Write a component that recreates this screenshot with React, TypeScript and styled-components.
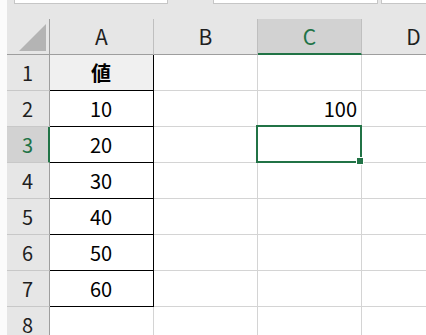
import React from "react";
import styled, { createGlobalStyle, css } from "styled-components";

const GlobalStyle = createGlobalStyle`
  html, body {
    margin: 0;
    padding: 0;
    background: #ffffff;
    overflow: hidden;
  }
  #root {
    width: 426px;
    height: 335px;
    overflow: hidden;
  }
`;

const FONT = `"Noto Sans CJK JP", "Noto Sans", sans-serif`;
const GREEN = "#217346";

const Window = styled.div`
  display: flex;
  width: 426px;
  height: 335px;
  overflow: hidden;
  background: #ffffff;
  font-family: ${FONT};
`;

const LeftStrip = styled.div`
  flex: 0 0 7px;
  background: #fbfbfb;
`;

const Main = styled.div`
  flex: 1 1 auto;
  display: flex;
  flex-direction: column;
  min-width: 0;
`;

const FormulaBar = styled.div`
  flex: 0 0 19px;
  display: flex;
  align-items: flex-start;
  background: #e6e6e6;
  padding-left: 7px;
  gap: 0;
`;

const InputBox = styled.div<{ $w: number; $ml: number }>`
  box-sizing: border-box;
  width: ${(p) => p.$w}px;
  margin-left: ${(p) => p.$ml}px;
  height: 4px;
  background: #ffffff;
  border: 1px solid #c6c6c6;
  border-top: none;
  flex: 0 0 auto;
`;

const Sheet = styled.div`
  display: grid;
  grid-template-columns: 43px repeat(4, 104px);
  grid-auto-rows: 36px;
  font-size: 20px;
  line-height: 35px;
  color: #000;
`;

const cellBase = css`
  box-sizing: border-box;
  position: relative;
  white-space: nowrap;
  overflow: visible;
`;

const Corner = styled.div`
  ${cellBase};
  background: #e6e6e6;
  border-right: 1px solid #9e9e9e;
  border-bottom: 1px solid #9e9e9e;
  display: flex;
  align-items: flex-end;
  justify-content: flex-end;
  padding: 0 3px 3px 0;
`;

const ColHeader = styled.div<{ $active?: boolean }>`
  ${cellBase};
  background: ${(p) => (p.$active ? "#d2d2d2" : "#e6e6e6")};
  color: ${(p) => (p.$active ? GREEN : "#1f1f1f")};
  border-right: 1px solid #bfbfbf;
  border-bottom: ${(p) => (p.$active ? `2px solid ${GREEN}` : "1px solid #9e9e9e")};
  line-height: ${(p) => (p.$active ? "34px" : "35px")};
  text-align: center;
  font-size: 21px;
`;

const RowHeader = styled.div<{ $active?: boolean }>`
  ${cellBase};
  background: ${(p) => (p.$active ? "#d2d2d2" : "#e6e6e6")};
  color: ${(p) => (p.$active ? GREEN : "#1f1f1f")};
  border-right: ${(p) => (p.$active ? `2px solid ${GREEN}` : "1px solid #9e9e9e")};
  border-bottom: 1px solid #c8c8c8;
  text-align: center;
  padding-right: ${(p) => (p.$active ? "0" : "1px")};
`;

const Cell = styled.div<{
  $boxed?: boolean;
  $align?: "left" | "center" | "right";
  $bold?: boolean;
  $shade?: boolean;
}>`
  ${cellBase};
  background: ${(p) => (p.$shade ? "#f0f0f0" : "#ffffff")};
  border-right: 1px solid ${(p) => (p.$boxed ? "#000000" : "#d4d4d4")};
  border-bottom: 1px solid ${(p) => (p.$boxed ? "#000000" : "#d4d4d4")};
  text-align: ${(p) => p.$align ?? "left"};
  font-weight: ${(p) => (p.$bold ? 700 : 400)};
  padding: 0 4px 0 3px;
`;

const Selection = styled.div`
  position: absolute;
  left: -2px;
  top: -2px;
  right: -1px;
  bottom: -1px;
  border: 2px solid ${GREEN};
  pointer-events: none;
  z-index: 2;
`;

const FillHandle = styled.div`
  position: absolute;
  right: -3px;
  bottom: -3px;
  width: 6px;
  height: 6px;
  background: ${GREEN};
  box-shadow: 0 0 0 1px #ffffff;
`;

const SelectAll = () => (
  <svg width="27" height="27" viewBox="0 0 27 27">
    <polygon points="27,0 27,27 0,27" fill="#b4b4b4" />
  </svg>
);

const columns = ["A", "B", "C", "D"];
const values: (string | null)[] = ["値", "10", "20", "30", "40", "50", "60", null];

export default function App() {
  return (
    <>
      <GlobalStyle />
      <Window>
        <LeftStrip />
        <Main>
          <FormulaBar>
            <InputBox $w={154} $ml={0} />
            <InputBox $w={165} $ml={45} />
            <InputBox $w={60} $ml={3} />
          </FormulaBar>
          <Sheet>
            <Corner>
              <SelectAll />
            </Corner>
            {columns.map((c) => (
              <ColHeader key={c} $active={c === "C"}>
                {c}
              </ColHeader>
            ))}
            {values.map((v, i) => {
              const row = i + 1;
              const inBox = row <= 7;
              return (
                <React.Fragment key={row}>
                  <RowHeader $active={row === 3}>{row}</RowHeader>
                  <Cell $boxed={inBox} $align="center" $bold={row === 1} $shade={row === 1}>
                    {v}
                  </Cell>
                  <Cell />
                  <Cell $align="right">
                    {row === 2 ? "100" : null}
                    {row === 3 ? (
                      <Selection>
                        <FillHandle />
                      </Selection>
                    ) : null}
                  </Cell>
                  <Cell />
                </React.Fragment>
              );
            })}
          </Sheet>
        </Main>
      </Window>
    </>
  );
}
